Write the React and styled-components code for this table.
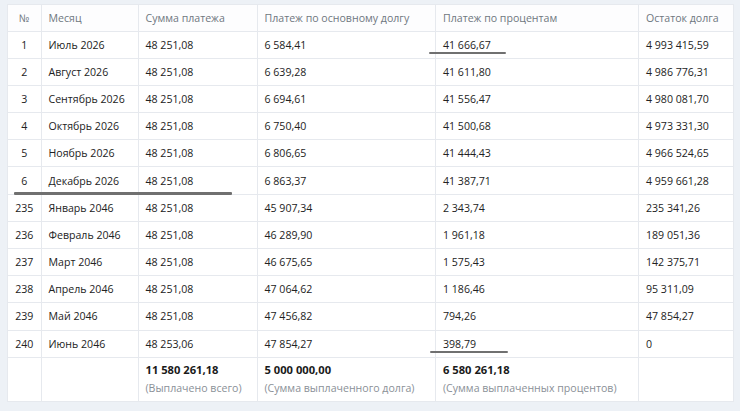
import React from "react";
import styled, { createGlobalStyle } from "styled-components";

const GlobalStyle = createGlobalStyle`
  html, body {
    margin: 0;
    padding: 0;
    background: #edf1f6;
  }
  body {
    font-family: "Open Sans", "Noto Sans", sans-serif;
  }
`;

const Page = styled.div`
  width: 740px;
  height: 411px;
  padding: 4px 7px 0 7px;
  box-sizing: border-box;
`;

const Wrap = styled.div`
  position: relative;
  width: 726px;
`;

const Table = styled.table`
  width: 726px;
  border-collapse: collapse;
  table-layout: fixed;
  background: #fff;
  font-size: 10.6px;
  color: #222;
`;

const Head = styled.th`
  height: 25.5px;
  padding: 0 7px;
  text-align: ${(p) => (p.$center ? "center" : "left")};
  font-weight: 400;
  color: #6f7780;
  background: #fdfdfe;
  border: 1px solid #e6e9ee;
  white-space: nowrap;
`;

const Cell = styled.td`
  height: 26.2px;
  padding: 0 7px;
  text-align: ${(p) => (p.$center ? "center" : "left")};
  border: 1px solid #e6e9ee;
  white-space: nowrap;
`;

const TotalCell = styled.td`
  height: 43px;
  padding: 0 7px;
  vertical-align: middle;
  border: 1px solid #e6e9ee;
  white-space: nowrap;
`;

const TotalValue = styled.div`
  font-weight: 700;
  font-size: 11.2px;
  color: #1a1a1a;
  line-height: 16px;
`;

const TotalNote = styled.div`
  color: #8a9097;
  font-size: 10.6px;
  line-height: 16px;
  margin-top: 2px;
`;

const Mark = styled.div`
  position: absolute;
  height: ${(p) => p.$h}px;
  background: #707070;
  border-radius: 1px;
`;

const columns = [
  { title: "№", width: 33.5, center: true },
  { title: "Месяц", width: 97 },
  { title: "Сумма платежа", width: 119 },
  { title: "Платеж по основному долгу", width: 178.5 },
  { title: "Платеж по процентам", width: 203 },
  { title: "Остаток долга", width: 95 },
];

const rows = [
  ["1", "Июль 2026", "48 251,08", "6 584,41", "41 666,67", "4 993 415,59"],
  ["2", "Август 2026", "48 251,08", "6 639,28", "41 611,80", "4 986 776,31"],
  ["3", "Сентябрь 2026", "48 251,08", "6 694,61", "41 556,47", "4 980 081,70"],
  ["4", "Октябрь 2026", "48 251,08", "6 750,40", "41 500,68", "4 973 331,30"],
  ["5", "Ноябрь 2026", "48 251,08", "6 806,65", "41 444,43", "4 966 524,65"],
  ["6", "Декабрь 2026", "48 251,08", "6 863,37", "41 387,71", "4 959 661,28"],
  ["235", "Январь 2046", "48 251,08", "45 907,34", "2 343,74", "235 341,26"],
  ["236", "Февраль 2046", "48 251,08", "46 289,90", "1 961,18", "189 051,36"],
  ["237", "Март 2046", "48 251,08", "46 675,65", "1 575,43", "142 375,71"],
  ["238", "Апрель 2046", "48 251,08", "47 064,62", "1 186,46", "95 311,09"],
  ["239", "Май 2046", "48 251,08", "47 456,82", "794,26", "47 854,27"],
  ["240", "Июнь 2046", "48 253,06", "47 854,27", "398,79", "0"],
];

const totals = [
  null,
  null,
  ["11 580 261,18", "(Выплачено всего)"],
  ["5 000 000,00", "(Сумма выплаченного долга)"],
  ["6 580 261,18", "(Сумма выплаченных процентов)"],
  null,
];

export default function App() {
  return (
    <>
      <GlobalStyle />
      <Page>
        <Wrap>
          <Table>
            <colgroup>
              {columns.map((c) => (
                <col key={c.title} style={{ width: c.width }} />
              ))}
            </colgroup>
            <thead>
              <tr>
                {columns.map((c) => (
                  <Head key={c.title} $center={c.center}>
                    {c.title}
                  </Head>
                ))}
              </tr>
            </thead>
            <tbody>
              {rows.map((r) => (
                <tr key={r[0]}>
                  {r.map((v, i) => (
                    <Cell key={i} $center={i === 0}>
                      {v}
                    </Cell>
                  ))}
                </tr>
              ))}
              <tr>
                {totals.map((t, i) => (
                  <TotalCell key={i}>
                    {t && (
                      <>
                        <TotalValue>{t[0]}</TotalValue>
                        <TotalNote>{t[1]}</TotalNote>
                      </>
                    )}
                  </TotalCell>
                ))}
              </tr>
            </tbody>
          </Table>
          <Mark $h={2} style={{ left: 422, top: 48, width: 77 }} />
          <Mark $h={3} style={{ left: 7, top: 188, width: 218 }} />
          <Mark $h={2} style={{ left: 423, top: 347, width: 78 }} />
        </Wrap>
      </Page>
    </>
  );
}
